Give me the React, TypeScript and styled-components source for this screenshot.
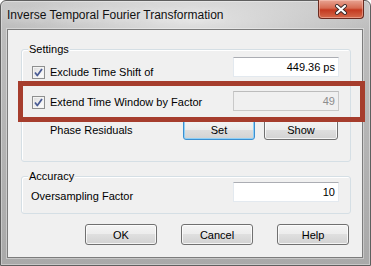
import styled, { createGlobalStyle } from "styled-components";

const GlobalStyle = createGlobalStyle`
  html, body {
    margin: 0;
    padding: 0;
    background: #ffffff;
  }
  body {
    font-family: "Liberation Sans", Arial, sans-serif;
    font-size: 11px;
    color: #000;
  }
`;

const Window = styled.div`
  position: relative;
  width: 371px;
  height: 266px;
  box-sizing: border-box;
  border: 1px solid #5f5f5f;
  border-radius: 6px 6px 0 0;
  padding: 0 7px 7px 6px;
  display: flex;
  flex-direction: column;
  background:
    radial-gradient(ellipse 180px 40px at 190px 20px, rgba(255, 255, 255, 0.55), rgba(255, 255, 255, 0) 100%),
    linear-gradient(to bottom, #c9c9c9 0px, #bdbdbd 30px, #a9a9a9 266px);
  box-shadow: inset 0 0 0 1px rgba(255, 255, 255, 0.35);
`;

const TitleBar = styled.div`
  height: 28px;
  display: flex;
  align-items: flex-start;
  justify-content: space-between;
`;

const Title = styled.span`
  margin-top: 7px;
  font-size: 12px;
  color: #111;
  white-space: nowrap;
  text-shadow: 0 0 8px rgba(255, 255, 255, 0.9);
`;

const CloseBtn = styled.div`
  width: 46px;
  height: 19px;
  margin-top: -1px;
  margin-right: -1px;
  box-sizing: border-box;
  border: 1px solid #6a2a1f;
  border-top: none;
  border-radius: 0 0 4px 4px;
  background: linear-gradient(to bottom, #e8a493 0%, #d66b52 45%, #c4391f 55%, #d46a4b 100%);
  box-shadow: inset 0 0 0 1px rgba(255, 210, 200, 0.45);
  display: flex;
  align-items: center;
  justify-content: center;
`;

const Client = styled.div`
  flex: 1;
  border: 1px solid #7c7c7c;
  background: #f0f0f0;
  box-shadow: 0 0 0 1px rgba(255, 255, 255, 0.35);
  display: flex;
  flex-direction: column;
`;

const Group = styled.div<{ $top: number; $pt: number; $pb: number }>`
  position: relative;
  margin: ${(p) => p.$top}px 11px 0 13px;
  padding: ${(p) => p.$pt}px 0 ${(p) => p.$pb}px 0;
  border: 1px solid #d5dfe5;
  border-radius: 3px;
  box-shadow: inset 1px 1px 0 #ffffff;
  display: flex;
  flex-direction: column;
`;

const Caption = styled.span`
  position: absolute;
  top: -8px;
  left: 6px;
  padding: 0 1px;
  background: #f0f0f0;
  font-size: 11px;
  line-height: 14px;
`;

const Row = styled.div<{ $mt: number; $indent: number; $right: number; $h?: number }>`
  display: flex;
  align-items: center;
  height: ${(p) => p.$h ?? 20}px;
  margin-top: ${(p) => p.$mt}px;
  padding-left: ${(p) => p.$indent}px;
  padding-right: ${(p) => p.$right}px;
`;

const Lead = styled.div<{ $dy: number }>`
  flex: 1;
  display: flex;
  align-items: center;
  position: relative;
  top: ${(p) => p.$dy}px;
`;

const CheckBox = styled.span`
  width: 13px;
  height: 13px;
  box-sizing: border-box;
  border: 1px solid #8e8f8f;
  background: linear-gradient(135deg, #dcdcdc 0%, #f6f6f6 70%, #ffffff 100%);
  box-shadow: inset 0 0 0 1px #f4f4f4;
  margin-right: 5px;
  flex-shrink: 0;
  display: flex;
  align-items: center;
  justify-content: center;
`;

const Label = styled.span`
  white-space: nowrap;
  font-size: 11px;
  color: #000;
`;

const Field = styled.div<{ $disabled?: boolean }>`
  width: 106px;
  height: 20px;
  box-sizing: border-box;
  border: 1px solid ${(p) => (p.$disabled ? "#c9c9c9" : "#e3e9ef")};
  border-top-color: ${(p) => (p.$disabled ? "#bcbcbc" : "#abadb3")};
  background: ${(p) => (p.$disabled ? "#f0f0f0" : "#ffffff")};
  color: ${(p) => (p.$disabled ? "#8d8d8d" : "#000")};
  text-align: right;
  padding-right: 3px;
  line-height: 18px;
  font-size: 11px;
`;

const ButtonGroup = styled.div`
  display: flex;
  gap: 9px;
`;

const Button = styled.div<{ $w: number; $focus?: boolean }>`
  width: ${(p) => p.$w}px;
  height: 21px;
  box-sizing: border-box;
  border: 1px solid ${(p) => (p.$focus ? "#3c8fd0" : "#707070")};
  border-radius: 3px;
  background: linear-gradient(to bottom, #f4f4f4 0%, #ececec 50%, #dfdfdf 50%, #d2d2d2 100%);
  box-shadow: inset 0 0 0 1px ${(p) => (p.$focus ? "#8fd0f7" : "rgba(255, 255, 255, 0.75)")};
  display: flex;
  align-items: center;
  justify-content: center;
  font-size: 11px;
  color: #000;
`;

const Footer = styled.div`
  display: flex;
  justify-content: flex-end;
  gap: 24px;
  margin: 10px 13px 0 0;
`;

const Highlight = styled.div`
  position: absolute;
  left: 17px;
  top: 80px;
  width: 347px;
  height: 41px;
  box-sizing: border-box;
  border: 5px solid #a63d2d;
  pointer-events: none;
`;

function Check() {
  return (
    <CheckBox>
      <svg width="9" height="9" viewBox="0 0 9 9">
        <path d="M1 4.5 L3.3 7.5 L8 1" fill="none" stroke="#4a5c95" strokeWidth="1.8" strokeLinejoin="round" />
      </svg>
    </CheckBox>
  );
}

function CloseGlyph() {
  return (
    <svg width="14" height="11" viewBox="0 0 14 11">
      <path d="M3 2 L11 9 M11 2 L3 9" stroke="#3a2a2a" strokeWidth="4" strokeLinecap="round" />
      <path d="M3 2 L11 9 M11 2 L3 9" stroke="#ffffff" strokeWidth="2.2" strokeLinecap="round" />
    </svg>
  );
}

export default function App() {
  return (
    <>
      <GlobalStyle />
      <Window>
        <TitleBar>
          <Title>Inverse Temporal Fourier Transformation</Title>
          <CloseBtn>
            <CloseGlyph />
          </CloseBtn>
        </TitleBar>
        <Client>
          <Group $top={19} $pt={7} $pb={21}>
            <Caption>Settings</Caption>
            <Row $mt={0} $indent={10} $right={11}>
              <Lead $dy={5}>
                <Check />
                <Label>Exclude Time Shift of</Label>
              </Lead>
              <Field>449.36 ps</Field>
            </Row>
            <Row $mt={14} $indent={10} $right={11}>
              <Lead $dy={1}>
                <Check />
                <Label>Extend Time Window by Factor</Label>
              </Lead>
              <Field $disabled>49</Field>
            </Row>
            <Row $mt={8} $indent={28} $right={12} $h={21}>
              <Lead $dy={0}>
                <Label>Phase Residuals</Label>
              </Lead>
              <ButtonGroup>
                <Button $w={72} $focus>Set</Button>
                <Button $w={74}>Show</Button>
              </ButtonGroup>
            </Row>
          </Group>
          <Group $top={14} $pt={5} $pb={11}>
            <Caption>Accuracy</Caption>
            <Row $mt={0} $indent={9} $right={11}>
              <Lead $dy={4}>
                <Label>Oversampling Factor</Label>
              </Lead>
              <Field>10</Field>
            </Row>
          </Group>
          <Footer>
            <Button $w={72}>OK</Button>
            <Button $w={72}>Cancel</Button>
            <Button $w={72}>Help</Button>
          </Footer>
        </Client>
        <Highlight />
      </Window>
    </>
  );
}
